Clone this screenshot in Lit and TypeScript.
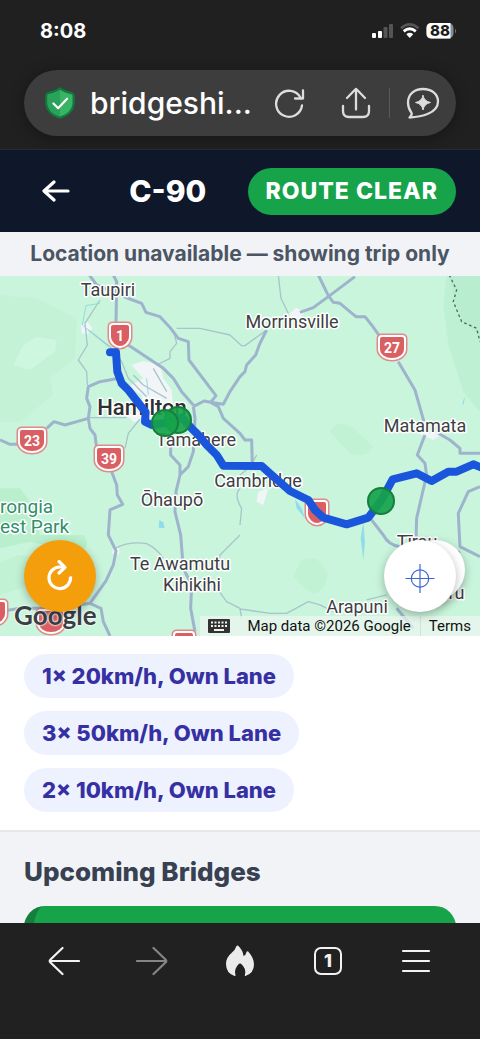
import { LitElement, html, css, svg } from "lit";
import { customElement, property } from "lit/decorators.js";

interface Place {
  name: string;
  x: number;
  y: number;
  kind?: string;
}

interface Shield {
  label: string;
  x: number;
  y: number;
  w: number;
}

const PLACES: Place[] = [
  { name: "Taupiri", x: 108, y: 20 },
  { name: "Morrinsville", x: 292, y: 52 },
  { name: "Matamata", x: 425, y: 156 },
  { name: "Hamilton", x: 142, y: 139, kind: "city" },
  { name: "Tamahere", x: 196, y: 170 },
  { name: "Cambridge", x: 258, y: 211 },
  { name: "Ōhaupō", x: 172, y: 230 },
  { name: "Te Awamutu", x: 180, y: 294 },
  { name: "Kihikihi", x: 192, y: 315 },
  { name: "Tīrau", x: 417, y: 272 },
  { name: "Putāruru", x: 430, y: 323 },
  { name: "Arapuni", x: 357, y: 337 },
  { name: "rongia", x: 0, y: 237, kind: "park" },
  { name: "est Park", x: 0, y: 257, kind: "park" },
];

const SHIELDS: Shield[] = [
  { label: "1", x: 120, y: 59, w: 20 },
  { label: "27", x: 392, y: 71, w: 26 },
  { label: "23", x: 32, y: 164, w: 26 },
  { label: "39", x: 109, y: 182, w: 26 },
  { label: "", x: 317, y: 236, w: 20 },
  { label: "", x: -4, y: 336, w: 20 },
  { label: "", x: 51, y: 345, w: 26 },
  { label: "", x: 184, y: 367, w: 20 },
];

const CHIPS = ["1× 20km/h, Own Lane", "3× 50km/h, Own Lane", "2× 10km/h, Own Lane"];

@customElement("status-bar")
export class StatusBar extends LitElement {
  static styles = css`
    :host {
      display: flex;
      align-items: center;
      justify-content: space-between;
      height: 62px;
      padding: 0 23px 0 40px;
      color: #fff;
    }
    .time {
      font-size: 20px;
      line-height: 24px;
      font-weight: 700;
    }
    .signals {
      display: block;
    }
    .level {
      font-size: 15px;
      font-weight: 800;
    }
  `;
  render() {
    return html`
      <span class="time">8:08</span>
      <svg class="signals" width="86" height="18" viewBox="0 0 86 18" role="img" aria-label="Signal, Wi-Fi, battery 88 percent">
        <rect x="1" y="11" width="4" height="5" rx="1" fill="#fff" />
        <rect x="7" y="9" width="4" height="7" rx="1" fill="#fff" />
        <rect x="12.5" y="5" width="4" height="11" rx="1" fill="#555" />
        <rect x="18" y="2" width="4" height="14" rx="1" fill="#555" />
        <path d="M30 6.2Q38.700 -1.500 47.500 6.200" fill="none" stroke="#555" stroke-width="2.800" />
        <path d="M32.700 9.400Q38.700 4 44.800 9.400" fill="none" stroke="#fff" stroke-width="2.800" />
        <path d="M35.300 12.200Q38.700 9.300 42.200 12.200L38.700 16Z" fill="#fff" />
        <rect x="55.500" y="1" width="27" height="15.500" rx="5" fill="#8a8a8a" />
        <path d="M60.500 1H79.500V16.500H60.500Q55.500 16.500 55.500 11.500V6Q55.500 1 60.500 1Z" fill="#fff" />
        <path d="M84 6.500Q86 9 84 11.500Z" fill="#777" />
        <text class="level" x="69" y="14" text-anchor="middle" fill="#1c1c1c">88</text>
      </svg>
    `;
  }
}

@customElement("address-bar")
export class AddressBar extends LitElement {
  static styles = css`
    :host {
      display: block;
      padding: 8px 24px 13px;
    }
    .pill {
      display: flex;
      align-items: center;
      height: 66px;
      box-sizing: border-box;
      padding: 0 8px 0 20px;
      border-radius: 33px;
      background: #3d3d3d;
      box-shadow: 0 2px 14px rgba(0, 0, 0, 0.35);
    }
    .shield {
      flex: none;
    }
    .address {
      flex: 1;
      min-width: 0;
      height: 44px;
      box-sizing: border-box;
      border: 0;
      padding: 0 0 0 14px;
      background: none;
      color: #fff;
      font: 500 30px/44px Inter, "Liberation Sans", sans-serif;
      text-overflow: ellipsis;
    }
    button {
      flex: none;
      display: grid;
      place-items: center;
      width: 50px;
      height: 50px;
      padding: 0;
      border: 0;
      background: none;
      color: #dcdcdc;
    }
    .share {
      margin-left: 16px;
    }
    .rule {
      width: 1px;
      height: 30px;
      margin: 0 8px;
      background: #5a5a5a;
    }
  `;
  render() {
    return html`
      <div class="pill">
        <svg class="shield" width="32" height="32" viewBox="0 0 33 34" aria-hidden="true">
          <path d="M16.500 1.500C20 4.500 25 5.500 29 6.500C30.500 7 31 8 31 9.500V16C31 25 25 30 16.500 32.500C8 30 2 25 2 16V9.500C2 8 2.500 7 4 6.500C8 5.500 13 4.500 16.500 1.500Z" fill="#39b364" stroke="#11793f" stroke-width="2.400" stroke-linejoin="round" />
          <path d="M16.500 3.500V31C9 28.500 3.500 24 3.500 16V10Q3.500 8 5 7.700C9 7 13 6 16.500 3.500Z" fill="#2aa25a" />
          <path d="M9.500 17.500L14.500 22.500L24 12.500" fill="none" stroke="#fff" stroke-width="2.300" stroke-linecap="round" stroke-linejoin="round" />
        </svg>
        <input class="address" type="text" aria-label="Address" value="bridgeshi..." />
        <button aria-label="Reload">
          <svg width="32" height="32" viewBox="0 0 32 32" fill="none" stroke="currentColor" stroke-width="2.300" stroke-linecap="round" stroke-linejoin="round">
            <path d="M28 18.500A13 13 0 1 1 26.500 10.500M29 3.500V11.500H21" />
          </svg>
        </button>
        <button class="share" aria-label="Share">
          <svg width="32" height="32" viewBox="0 0 32 32" fill="none" stroke="currentColor" stroke-width="2.300" stroke-linecap="round" stroke-linejoin="round">
            <path d="M16 22.500V2M7 11L14.500 3.300Q16 1.700 17.500 3.300L25 11M3 19V24Q3 30 9 30H23Q29 30 29 24V19" />
          </svg>
        </button>
        <span class="rule"></span>
        <button aria-label="Ask assistant">
          <svg width="34" height="34" viewBox="0 0 34 34" fill="none" stroke="currentColor" stroke-width="2.300" stroke-linecap="round" stroke-linejoin="round">
            <path d="M3.500 31.500C5 30 6.500 28 5.300 26.500C3 23.500 2 20.500 2 16.500C2 8 8.500 3 17 3C25.500 3 32 8 32 15.500C32 27.500 15 31 3.500 31.500Z" />
            <path d="M17 9.500Q18 15.200 24.500 16.500Q18 17.800 17 24Q16 17.800 9.500 16.500Q16 15.200 17 9.500Z" fill="currentColor" stroke-width="1" />
          </svg>
        </button>
      </div>
    `;
  }
}

@customElement("trip-map")
export class TripMap extends LitElement {
  @property({ type: Array }) places = PLACES;
  @property({ type: Array }) shields = SHIELDS;

  static styles = css`
    :host {
      display: block;
      position: relative;
      height: 360px;
      overflow: hidden;
      background: #c9f5dc;
      font-family: Roboto, "Liberation Sans", sans-serif;
    }
    .canvas {
      display: block;
      width: 100%;
      height: 100%;
    }
    .road {
      fill: none;
      stroke: #9eb4cc;
      stroke-width: 9;
      stroke-linejoin: round;
    }
    .lane {
      fill: none;
      stroke: #a9c4cb;
      stroke-width: 4;
      stroke-linejoin: round;
    }
    .water {
      fill: #91dcec;
    }
    .stream {
      fill: none;
      stroke: #8fdcdc;
      stroke-width: 3;
    }
    .town {
      fill: #f2f5f8;
    }
    .bush {
      fill: #b9efcc;
    }
    .bush.deep {
      fill: #b0ebc8;
    }
    .track {
      fill: none;
      stroke: #4f6b5b;
      stroke-width: 4;
      stroke-dasharray: 8 8;
    }
    .route {
      fill: none;
      stroke: #1a56db;
      stroke-width: 24;
      stroke-linecap: round;
      stroke-linejoin: round;
    }
    .bridge {
      fill: #16a34a;
      fill-opacity: 0.92;
      stroke: #15803d;
      stroke-width: 2;
    }
    .place {
      font-size: 18px;
      fill: #3d4043;
      stroke: #fff;
      stroke-width: 3px;
      stroke-linejoin: round;
      paint-order: stroke;
      text-anchor: middle;
    }
    .place.city {
      font-size: 22px;
      font-weight: 500;
      fill: #2d2f31;
    }
    .place.park {
      font-size: 19px;
      fill: #2f8f6b;
      text-anchor: start;
    }
    .number {
      font-size: 14px;
      font-weight: 700;
      fill: #fff;
      text-anchor: middle;
    }
    .round {
      position: absolute;
      display: grid;
      place-items: center;
      width: 72px;
      height: 72px;
      padding: 0;
      border: 0;
      border-radius: 50%;
      bottom: 24px;
      background: #fff;
      box-shadow: 0 3px 10px rgba(0, 0, 0, 0.28);
    }
    .refresh {
      left: 24px;
      background: #f59e0b;
      color: #fff;
    }
    .locate {
      right: 24px;
    }
    .camera {
      right: 15px;
      bottom: 36px;
      width: 60px;
      height: 60px;
    }
    .brand {
      position: absolute;
      left: 14px;
      bottom: 5px;
      font: 700 26px/32px Lato, "Open Sans", sans-serif;
      color: #3b3f44;
      text-shadow: 0 0 2px #fff, 0 0 2px #fff, 0 0 2px #fff;
      text-decoration: none;
    }
    .credits {
      position: absolute;
      right: 0;
      bottom: 0;
      display: flex;
      height: 20px;
      font-size: 15px;
      line-height: 20px;
      color: #111;
    }
    .credits > * {
      display: flex;
      align-items: center;
      height: 20px;
      padding: 0 9px 0 8px;
      border: 0;
      background: rgba(236, 246, 240, 0.75);
      color: inherit;
      text-decoration: none;
    }
    .credits > a {
      border-left: 1px solid #cfe3d8;
    }
  `;

  private shield(s: Shield) {
    const h = s.w / 2;
    const outline = `M${-h + 3} -11H${h - 3}Q${h} -11 ${h} -8V2C${h} 8 ${h - 6} 12 0 12C${-h + 6} 12 ${-h} 8 ${-h} 2V-8Q${-h} -11 ${-h + 3} -11Z`;
    return svg`
      <g transform="translate(${s.x} ${s.y})">
        <path d=${outline} fill="#d95f63" stroke="#e08a8a" stroke-width="5" />
        <path d=${outline} fill="#d95f63" stroke="#fff" stroke-width="2" />
        <text class="number" y="6">${s.label}</text>
      </g>`;
  }

  render() {
    return html`
      <svg class="canvas" viewBox="0 0 480 360" preserveAspectRatio="xMidYMid slice" role="img" aria-label="Map of the trip route through Waikato">
        <g transform="translate(0 -1) scale(.3333)">
          <path class="bush" opacity=".35" d="M0 60L110 70L230 130L225 250L150 310L160 360L60 440L0 440Z" />
          <path fill="#cdf7df" d="M70 210L110 185L170 195L165 230L90 285L40 270Z" />
          <path class="bush" d="M0 640L60 640L90 680L120 780L250 780Q280 820 230 830L90 800L0 820Z" />
          <path class="bush deep" opacity=".4" d="M1340 0H1440V410L1390 350L1345 210L1330 90Z" />
          <path class="bush deep" opacity=".4" d="M1345 0H1440V190L1390 140L1365 80Z" />
          <path class="bush" opacity=".5" d="M990 470Q1010 430 1060 460L1120 515Q1100 550 1050 535Z" />
          <path class="bush" opacity=".5" d="M900 860Q930 840 960 860L985 895L975 930Q950 970 920 945L880 905Z" />
          <path class="bush" opacity=".5" d="M60 840L110 850L90 930L0 960V860Z" />

          <path class="town" d="M395 270L430 258L480 270L490 310L515 345L520 400L480 430L400 440L380 420L430 410L425 360L385 335L430 310Z" />
          <path class="town" d="M243 150L262 140L278 160L262 178L245 175ZM870 115L888 98L915 110L900 128L870 130ZM1255 475H1330L1300 495ZM775 650L805 640L790 690L770 680ZM338 820H358V838H338Z" />

          <path class="lane" d="M300 75L255 145L262 210L235 255L260 290L262 330M265 165L330 215L365 260L385 310L440 365M530 160H600L690 180L725 212H735L800 165M835 0L843 70L865 115M520 165L530 205L510 230V250L470 270M345 820Q390 798 440 806Q470 820 490 850M720 780L660 840L655 880M640 925L680 980L720 1000L725 1030M375 520L385 475L420 432M265 428H380M400 300L430 330L500 370M460 280L500 350M720 600Q750 580 770 540M720 1002L810 1015H860L925 980L960 990L1000 1010M1100 975L1160 960M720 750L725 700Q700 660 720 640" />
          <path class="stream" d="M300 85L258 92L247 150L325 215M440 310L445 360" />
          <path class="road" d="M340 0L350 20L348 150M268 0L290 30L390 72L425 85L438 112L480 125L508 155L535 190L565 200L567 255L648 362L632 382L612 378L580 395M632 382L670 388L690 350L720 305L735 290L740 270L767 240L780 205L800 165M632 382L655 395L670 430L720 475L735 495H755L757 570M900 112L940 98L985 65L1065 5M955 0L985 62L1000 82L1020 85L1068 125H1095L1115 150L1140 185M1195 260L1245 345L1272 440M1275 480L1252 540L1275 565L1280 600L1250 730L1248 800M1315 475L1350 495L1380 520V535H1440M385 210L430 240L490 280L520 310L545 350L580 390" />
          <path class="road" d="M0 495L30 508H60M140 460L162 440L195 450L265 430L270 395L260 370L265 335L300 320L365 308M265 430L270 460L285 480L290 520M335 590L350 630L352 660L368 688L330 705L325 780L348 828L340 870L318 918L270 985L303 1000L310 1040L330 1083M0 1010L60 1000L180 1000L270 985M512 480V540L540 570V600L528 650L525 710L542 780L550 880L575 930L572 1000L585 1070M580 395L585 430L580 530L565 575L540 600M1115 735L1150 780Q1165 810 1200 815M1440 635L1405 650L1375 715L1380 815L1440 845M1380 830L1340 850M1190 1000L1240 1060" />
          <path class="water" d="M1090 740L1082 790L1090 855L1095 800ZM885 672L905 700L915 730L890 700ZM478 735L490 742L494 760L476 758ZM1390 375L1395 365L1392 385L1387 392Z" />
          <path class="track" d="M1348 0L1370 45L1360 80L1385 140L1430 160L1440 200" />
        </g>

        ${this.shields.map((s) => this.shield(s))}
        ${this.places.map(
          (p) => svg`<text class="place ${p.kind ?? ""}" x=${p.x} y=${p.y}>${p.name}</text>`
        )}

        <g transform="translate(0 -1) scale(.3333)">
          <path class="route" d="M330 232H348L352 290L365 325L385 345L420 390L437 412L435 440L455 450L490 445L545 428L575 460L600 485L620 510L650 540L670 572L785 573L815 600L870 648L925 675L945 705L970 728L1040 748L1105 728L1145 675L1178 613L1250 595L1295 618L1345 590H1370L1420 568L1445 578" />
        </g>
        <circle class="bridge" cx="178" cy="144" r="13" />
        <circle class="bridge" cx="165" cy="147" r="13" />
        <circle class="bridge" cx="381" cy="225" r="13" />
      </svg>

      <a class="brand" href="#google">Google</a>
      <div class="credits">
        <button aria-label="Keyboard shortcuts">
          <svg width="22" height="14" viewBox="0 0 22 14" aria-hidden="true">
            <rect width="22" height="14" rx="1" fill="#333" />
            <path d="M3 3.500H19M3 7H19" stroke="#eef6f1" stroke-width="2" stroke-dasharray="2 1.500" />
            <path d="M6 11H16" stroke="#eef6f1" stroke-width="2" />
          </svg>
        </button>
        <span>Map data ©2026 Google</span>
        <a href="#terms">Terms</a>
      </div>
      <button class="round refresh" aria-label="Refresh trip">
        <svg width="26" height="34" viewBox="0 0 26 34" fill="none" stroke="currentColor" stroke-width="3.200">
          <path d="M23.500 17.500A10.800 10.800 0 1 1 12.700 8H18" />
          <path d="M12 2.500L18 8.300L12 14" stroke-linecap="round" stroke-linejoin="round" />
        </svg>
      </button>
      <button class="round camera" aria-label="Map camera controls"></button>
      <button class="round locate" aria-label="Centre on my location">
        <svg width="30" height="36" viewBox="0 -3 30 36" fill="none" stroke="#3b66d6" stroke-width="1.200">
          <circle cx="15" cy="17.500" r="8.700" />
          <path d="M15 3V32M.5 17.500H29.500" />
        </svg>
      </button>
    `;
  }
}

@customElement("browser-nav")
export class BrowserNav extends LitElement {
  static styles = css`
    :host {
      display: block;
      flex: none;
      padding: 14px 20px 54px;
      background: #212121;
      position: relative;
    }
    .row {
      display: flex;
    }
    button {
      flex: 1;
      display: grid;
      place-items: center;
      height: 48px;
      padding: 0;
      border: 0;
      background: none;
      color: #f2f2f2;
    }
    button:disabled {
      color: #858585;
    }
    .tabs {
      display: grid;
      place-items: center;
      width: 28px;
      height: 28px;
      box-sizing: border-box;
      border: 2px solid currentColor;
      border-radius: 7px;
      font: 800 18px/24px Inter, sans-serif;
    }
  `;
  render() {
    return html`
      <nav class="row" aria-label="Browser">
        <button aria-label="Back">
          <svg width="32" height="30" viewBox="0 0 32 30" fill="none" stroke="currentColor" stroke-width="2.200" stroke-linecap="round" stroke-linejoin="round"><path d="M14.500 2L2.500 13.500Q1 15 2.500 16.500L14.500 28M2 15H31" /></svg>
        </button>
        <button aria-label="Forward" disabled>
          <svg width="32" height="30" viewBox="0 0 32 30" fill="none" stroke="currentColor" stroke-width="2.200" stroke-linecap="round" stroke-linejoin="round"><path d="M17.500 2L29.500 13.500Q31 15 29.500 16.500L17.500 28M30 15H1" /></svg>
        </button>
        <button aria-label="Clear data">
          <svg width="30" height="32" viewBox="0 0 30 32" fill="#ebebeb"><path d="M11.500 1Q12.500 0 13.700 1.200Q18 5.500 18.500 11Q21 10 21.500 7Q22 5.800 23.200 6.500Q29 13 29 19.500Q29 28 20.500 31Q19.500 31.200 19.800 30.300Q22 24 16 18.800Q15 18 14 18.800Q8.500 24 10.500 30.300Q10.700 31.300 9.500 31Q1 28 1 19Q1 12.500 6.500 8Q10.500 4.500 11.500 1Z" /></svg>
        </button>
        <button aria-label="Tabs, one open"><span class="tabs">1</span></button>
        <button aria-label="Menu">
          <svg width="30" height="26" viewBox="0 0 30 26" stroke="currentColor" stroke-width="2.200" stroke-linecap="round"><path d="M2 3H28M2 13H28M2 23H28" /></svg>
        </button>
      </nav>
    `;
  }
}

@customElement("app-root")
export class AppRoot extends LitElement {
  static styles = css`
    :host {
      display: flex;
      flex-direction: column;
      height: 100vh;
      background: #202020;
      font-family: Inter, "Liberation Sans", sans-serif;
    }
    .page {
      flex: 1;
      min-height: 0;
      overflow: hidden;
      background: #f2f3f7;
    }
    .header {
      display: flex;
      align-items: center;
      justify-content: space-between;
      height: 83px;
      box-sizing: border-box;
      padding: 0 24px;
      background: #0f172a;
      border-top: 1px solid #242b36;
      color: #fff;
    }
    .back {
      display: grid;
      place-items: center;
      width: 64px;
      height: 48px;
      padding: 0;
      border: 0;
      background: none;
      color: inherit;
    }
    .title {
      margin: 0;
      font-size: 30px;
      line-height: 36px;
      font-weight: 800;
    }
    .state {
      padding: 10px 18px;
      border-radius: 24px;
      background: #16a34a;
      font-size: 23px;
      line-height: 27px;
      font-weight: 800;
      letter-spacing: 1px;
      white-space: nowrap;
    }
    .notice {
      margin: 0;
      padding: 8px 12px;
      text-align: center;
      font-size: 21px;
      line-height: 28px;
      font-weight: 700;
      color: #4b5563;
    }
    .chips {
      display: flex;
      flex-direction: column;
      align-items: flex-start;
      gap: 13px;
      margin: 0;
      padding: 18px 24px;
      list-style: none;
      background: #fff;
      border-bottom: 2px solid #e5e7eb;
    }
    .chip {
      padding: 8px 18px;
      border-radius: 22px;
      background: #eef2ff;
      color: #3730a3;
      font-size: 22px;
      line-height: 28px;
      font-weight: 800;
    }
    .upcoming {
      padding: 24px;
    }
    .heading {
      margin: 0 0 18px;
      font-size: 26px;
      line-height: 32px;
      font-weight: 800;
      color: #374151;
    }
    .card {
      height: 120px;
      border-left: 10px solid #15803d;
      border-radius: 21px;
      background: #16a34a;
    }
  `;
  render() {
    return html`
      <status-bar></status-bar>
      <address-bar></address-bar>
      <main class="page">
        <header class="header">
          <button class="back" aria-label="Back">
            <svg width="28" height="24" viewBox="0 0 28 24" fill="none" stroke="currentColor" stroke-width="3.200" stroke-linecap="round" stroke-linejoin="round"><path d="M12 3L2 12L12 21M2.500 12H26" /></svg>
          </button>
          <h1 class="title">C-90</h1>
          <span class="state">ROUTE CLEAR</span>
        </header>
        <p class="notice">Location unavailable — showing trip only</p>
        <trip-map></trip-map>
        <ul class="chips">
          ${CHIPS.map((c) => html`<li class="chip">${c}</li>`)}
        </ul>
        <section class="upcoming">
          <h2 class="heading">Upcoming Bridges</h2>
          <div class="card"></div>
        </section>
      </main>
      <browser-nav></browser-nav>
    `;
  }
}
